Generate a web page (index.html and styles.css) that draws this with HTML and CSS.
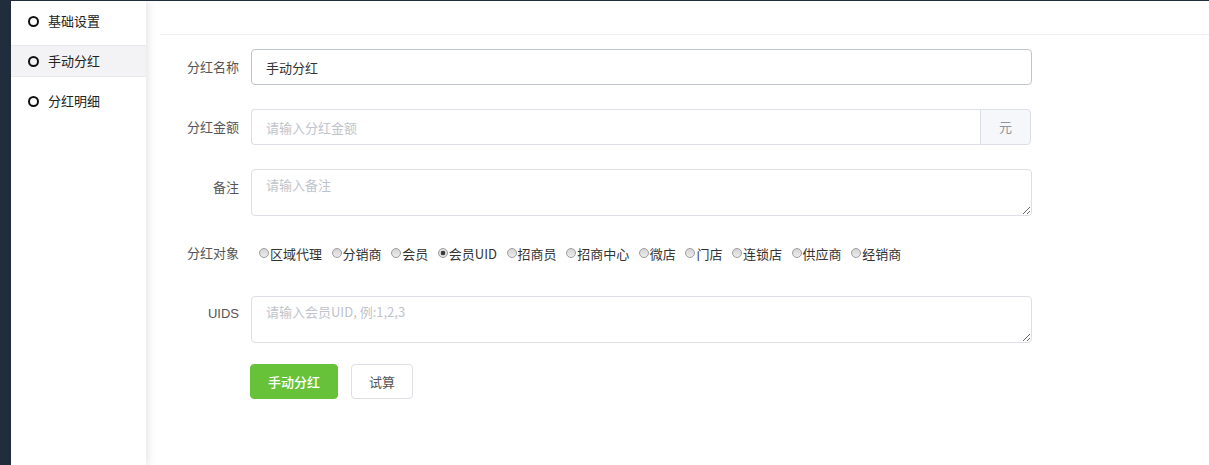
FILE: index.html
```html
<!DOCTYPE html>
<html lang="zh-CN">
<head>
    <meta charset="UTF-8">
    <meta name="viewport" content="width=device-width, initial-scale=1.0">
    <title>手动分红</title>
    <link rel="stylesheet" href="styles.css">
</head>
<body>
    <div class="rail"></div>

    <aside class="sidebar">
        <ul class="menu">
            <li class="menu-item"><span class="dot"></span>基础设置</li>
            <li class="menu-item active"><span class="dot"></span>手动分红</li>
            <li class="menu-item"><span class="dot"></span>分红明细</li>
        </ul>
    </aside>

    <main class="main">
        <div class="page-head"></div>

        <form class="form" id="bonusForm">
            <div class="form-row">
                <label class="form-label" for="name">分红名称</label>
                <div class="form-field">
                    <input type="text" id="name" class="input input-hover" value="手动分红">
                </div>
            </div>

            <div class="form-row">
                <label class="form-label" for="amount">分红金额</label>
                <div class="form-field">
                    <div class="input-group">
                        <input type="text" id="amount" class="input" placeholder="请输入分红金额">
                        <span class="addon">元</span>
                    </div>
                </div>
            </div>

            <div class="form-row">
                <label class="form-label" for="remark">备注</label>
                <div class="form-field">
                    <textarea id="remark" class="textarea" placeholder="请输入备注"></textarea>
                </div>
            </div>

            <div class="form-row radio-row">
                <span class="form-label">分红对象</span>
                <div class="radio-list">
                    <label class="radio"><input type="radio" name="target">区域代理</label>
                    <label class="radio"><input type="radio" name="target">分销商</label>
                    <label class="radio"><input type="radio" name="target">会员</label>
                    <label class="radio"><input type="radio" name="target" checked>会员UID</label>
                    <label class="radio"><input type="radio" name="target">招商员</label>
                    <label class="radio"><input type="radio" name="target">招商中心</label>
                    <label class="radio"><input type="radio" name="target">微店</label>
                    <label class="radio"><input type="radio" name="target">门店</label>
                    <label class="radio"><input type="radio" name="target">连锁店</label>
                    <label class="radio"><input type="radio" name="target">供应商</label>
                    <label class="radio"><input type="radio" name="target">经销商</label>
                </div>
            </div>

            <div class="form-row">
                <label class="form-label label-latin" for="uids">UIDS</label>
                <div class="form-field">
                    <textarea id="uids" class="textarea" placeholder="请输入会员UID, 例:1,2,3"></textarea>
                </div>
            </div>

            <div class="actions">
                <button type="submit" class="btn btn-primary">手动分红</button>
                <button type="button" class="btn">试算</button>
            </div>
        </form>
    </main>
</body>
</html>
```

FILE: styles.css
```css
* {
    margin: 0;
    padding: 0;
    box-sizing: border-box;
}

body {
    font-family: "Noto Sans CJK SC", "Liberation Sans", sans-serif;
    font-size: 13px;
    color: #333;
    background: #fff;
    border-top: 1px solid #1f2d3d;
    min-height: 100vh;
    display: flex;
    overflow: hidden;
}

.rail {
    width: 11px;
    flex-shrink: 0;
    background: #1f2d3d;
}

/* sidebar */
.sidebar {
    width: 135px;
    flex-shrink: 0;
    background: #fff;
    box-shadow: 3px 0 7px rgba(0, 0, 0, 0.09);
    position: relative;
    z-index: 1;
}

.menu {
    list-style: none;
    padding-top: 4px;
}

.menu-item {
    display: flex;
    align-items: center;
    height: 32px;
    line-height: 30px;
    padding-left: 17px;
    margin-bottom: 8px;
    border-top: 1px solid transparent;
    border-bottom: 1px solid transparent;
    color: #222;
    cursor: pointer;
}

.menu-item.active {
    background: #f3f3f5;
    border-color: #e8e8ee;
}

.dot {
    width: 11px;
    height: 11px;
    border: 2px solid #111;
    border-radius: 50%;
    margin-right: 9px;
}

/* main */
.main {
    flex: 1;
    padding-left: 14px;
}

.page-head {
    height: 34px;
    border-bottom: 1px solid #ebeef5;
}

.form {
    padding-top: 14px;
}

.form-row {
    display: flex;
    margin-bottom: 24px;
}

.form-label {
    width: 91px;
    flex-shrink: 0;
    padding-right: 12px;
    text-align: right;
    line-height: 36px;
    color: #555;
}

.label-latin {
    font-family: "Liberation Sans", sans-serif;
    font-size: 13px;
}

.form-field {
    width: 781px;
}

.input {
    width: 100%;
    height: 36px;
    padding: 0 14px;
    border: 1px solid #dcdfe6;
    border-radius: 4px;
    font-family: inherit;
    font-size: 13px;
    color: #333;
    outline: none;
}

.input-hover {
    border-color: #c0c4cc;
}

.input::placeholder,
.textarea::placeholder {
    color: #c0c4cc;
}

.input-group {
    display: flex;
    width: 780px;
}

.input-group .input {
    border-radius: 4px 0 0 4px;
    border-right: none;
}

.addon {
    width: 51px;
    flex-shrink: 0;
    height: 36px;
    line-height: 34px;
    text-align: center;
    background: #f5f7fa;
    border: 1px solid #dcdfe6;
    border-radius: 0 4px 4px 0;
    color: #909399;
}

.textarea {
    display: block;
    width: 100%;
    height: 47px;
    padding: 5px 14px;
    border: 1px solid #dcdfe6;
    border-radius: 4px;
    font-family: inherit;
    font-size: 13px;
    line-height: 20px;
    color: #333;
    resize: vertical;
    outline: none;
}

/* radios */
.radio-row {
    margin-bottom: 30px;
}

.radio-row .form-label {
    line-height: 26px;
}

.radio-list {
    display: flex;
    align-items: center;
    height: 26px;
    padding-left: 8px;
}

.radio {
    display: flex;
    align-items: center;
    margin-right: 9.6px;
    color: #333;
    cursor: pointer;
}

.radio input {
    appearance: none;
    width: 10px;
    height: 10px;
    margin-right: 1px;
    border: 1px solid #9d9d9d;
    border-radius: 50%;
    background: linear-gradient(#d4d4d4, #ececec);
}

.radio input:checked {
    background: radial-gradient(circle, #3a3a3a 0, #3a3a3a 2px, #dedede 2.6px);
}

/* buttons */
.actions {
    display: flex;
    gap: 13px;
    padding-left: 90px;
    margin-top: -3px;
}

.btn {
    height: 35px;
    padding: 0 17px;
    border: 1px solid #dcdfe6;
    border-radius: 4px;
    background: #fff;
    font-family: inherit;
    font-size: 13px;
    color: #555;
    white-space: nowrap;
    cursor: pointer;
}

.btn-primary {
    background: #67c23a;
    border-color: #67c23a;
    color: #fff;
    font-weight: 500;
}
```
